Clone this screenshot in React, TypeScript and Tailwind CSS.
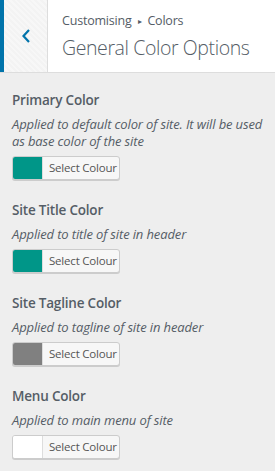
import React from "react";

const controls = [
  {
    title: "Primary Color",
    desc: "Applied to default color of site. It will be used as base color of the site",
    color: "#009688",
  },
  { title: "Site Title Color", desc: "Applied to title of site in header", color: "#009688" },
  { title: "Site Tagline Color", desc: "Applied to tagline of site in header", color: "#808080" },
  { title: "Menu Color", desc: "Applied to main menu of site", color: "#ffffff" },
];

function ColorButton({ color }: { color: string }) {
  return (
    <button className="flex h-[24px] w-[108px] items-stretch overflow-hidden rounded-[3px] border border-[#cccccc] bg-[#f7f7f7] p-0 shadow-[0_1px_0_#cccccc]">
      <span className="w-[30px] border-r border-[#dddddd]" style={{ background: color }} />
      <span className="flex flex-1 items-center whitespace-nowrap pl-[6px] text-[11.5px] tracking-[-0.2px] text-[#555555]">
        Select Colour
      </span>
    </button>
  );
}

export default function App() {
  return (
    <div
      className="h-[471px] w-[275px] overflow-hidden bg-[#eeeeee] text-[#555d66]"
      style={{ fontFamily: '"Open Sans", "Noto Sans", sans-serif' }}
    >
      {/* header */}
      <div className="flex h-[73px] border-b border-[#dddddd] bg-white">
        <div className="flex w-[48px] items-center justify-center border-l-4 border-r border-l-[#0073aa] border-r-[#dddddd] bg-[repeating-linear-gradient(45deg,#f3f3f3_0px,#f3f3f3_2px,#f7f7f7_2px,#f7f7f7_4px)]">
          <svg width="10" height="16" viewBox="0 0 10 16" className="-mt-[1px]">
            <polyline points="8,2 2.5,8 8,14" fill="none" stroke="#0073aa" strokeWidth="2.2" />
          </svg>
        </div>
        <div className="flex flex-col pl-[14px] pt-[12px]">
          <div className="flex items-center whitespace-nowrap text-[12.5px] leading-[18px] tracking-[-0.2px]">
            Customising
            <span className="mx-[6px] text-[8px]">▸</span>
            Colors
          </div>
          <div className="mt-[5px] text-[19.5px] font-light leading-[26px] tracking-[-0.4px]">
            General Color Options
          </div>
        </div>
      </div>

      {/* controls */}
      <div className="flex flex-col gap-[18px] px-[12px] pt-[15px]">
        {controls.map((c) => (
          <div key={c.title} className="flex flex-col">
            <div className="text-[13.5px] font-semibold leading-[24px] tracking-[-0.2px]">{c.title}</div>
            <div className="mt-[4px] text-[13px] italic leading-[17px] tracking-[-0.13px]">{c.desc}</div>
            <div className="mt-[6px]">
              <ColorButton color={c.color} />
            </div>
          </div>
        ))}
      </div>
    </div>
  );
}
